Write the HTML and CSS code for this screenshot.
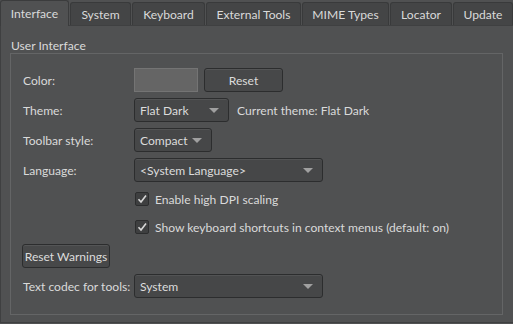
FILE: index.html
```html
<!DOCTYPE html>
<html>
<head>
<meta charset="utf-8">
<link rel="stylesheet" href="styles.css">
</head>
<body>
<div class="tabs">
  <div class="tab active w-interface">Interface</div>
  <div class="tab w-system">System</div>
  <div class="tab w-keyboard">Keyboard</div>
  <div class="tab w-ext">External Tools</div>
  <div class="tab w-mime">MIME Types</div>
  <div class="tab w-locator">Locator</div>
  <div class="tab w-update">Update</div>
</div>
<div class="pane">
  <div class="group-title">User Interface</div>
  <div class="group">
    <div class="form">
      <div class="label">Color:</div>
      <div class="row">
        <div class="swatch"></div>
        <div class="button w-reset">Reset</div>
      </div>

      <div class="label">Theme:</div>
      <div class="row">
        <div class="combo w-theme"><span>Flat Dark</span><span class="arrow"></span></div>
        <div class="text">Current theme: Flat Dark</div>
      </div>

      <div class="label">Toolbar style:</div>
      <div class="row">
        <div class="combo w-toolbar"><span>Compact</span><span class="arrow"></span></div>
      </div>

      <div class="label">Language:</div>
      <div class="row">
        <div class="combo w-wide"><span>&lt;System Language&gt;</span><span class="arrow"></span></div>
      </div>

      <div class="label"></div>
      <div class="row">
        <div class="check"><span class="box"><svg width="12" height="12" viewBox="0 0 12 12"><path d="M2.5 6.2 L5 9 L10 2.5" fill="none" stroke="#d8d8d8" stroke-width="1.6"/></svg></span>Enable high DPI scaling</div>
      </div>

      <div class="label"></div>
      <div class="row">
        <div class="check"><span class="box"><svg width="12" height="12" viewBox="0 0 12 12"><path d="M2.5 6.2 L5 9 L10 2.5" fill="none" stroke="#d8d8d8" stroke-width="1.6"/></svg></span>Show keyboard shortcuts in context menus (default: on)</div>
      </div>

      <div class="full">
        <div class="button w-warn">Reset Warnings</div>
      </div>

      <div class="label">Text codec for tools:</div>
      <div class="row">
        <div class="combo w-wide"><span>System</span><span class="arrow"></span></div>
      </div>
    </div>
  </div>
</div>
</body>
</html>
```
FILE: styles.css
```css
html, body {
  margin: 0;
  padding: 0;
  background: #505152;
  width: 513px;
  height: 324px;
  overflow: hidden;
}
body {
  font-family: "Lato", "Noto Sans", sans-serif;
  font-size: 12.1px;
  color: #dadada;
}
.tabs {
  display: flex;
  gap: 1px;
  height: 25px;
  align-items: flex-end;
}
.tab {
  box-sizing: border-box;
  height: 23px;
  background: #444546;
  border: 1px solid #393a3b;
  border-bottom: none;
  border-radius: 3px 3px 0 0;
  display: flex;
  align-items: center;
  justify-content: center;
  padding-top: 1px;
}
.tab.active {
  height: 26px;
  margin-bottom: -1px;
  background: #505152;
  position: relative;
  z-index: 1;
  border-color: #3b3c3d;
  padding-top: 0;
}
.w-interface { width: 69px; }
.w-system { width: 61px; }
.w-keyboard { width: 73px; }
.w-ext { width: 95px; }
.w-mime { width: 87px; }
.w-locator { width: 62px; }
.w-update { width: 60px; }

.pane {
  box-sizing: border-box;
  height: 298px;
  border: 1px solid #3f4041;
  border-right: none;
  padding: 12px 0 0 9px;
}
.group-title {
  height: 15px;
  line-height: 15px;
  padding-left: 1px;
}
.group {
  box-sizing: border-box;
  width: 493px;
  height: 262px;
  border: 1px solid #646566;
  padding: 14px 0 0 12px;
}
.form {
  display: grid;
  grid-template-columns: 111px 1fr;
  grid-template-rows: 24px 24px 24px 24px 22px 22px 24px 24px;
  row-gap: 6px;
}
.label {
  display: flex;
  align-items: center;
}
.row {
  display: flex;
  align-items: center;
  gap: 6px;
}
.full {
  grid-column: 1 / 3;
  display: flex;
  align-items: center;
  margin-left: -1px;
}
.swatch {
  box-sizing: border-box;
  width: 64px;
  height: 24px;
  background: #656565;
  border: 1px solid #747474;
}
.button {
  box-sizing: border-box;
  height: 24px;
  border: 1px solid #2c2d2e;
  border-radius: 3px;
  background: #474849;
  box-shadow: inset 0 1px 0 #545556;
  display: flex;
  align-items: center;
  justify-content: center;
  color: #dcdcdc;
}
.w-reset { width: 79px; }
.w-warn { width: 88px; }
.combo {
  box-sizing: border-box;
  height: 24px;
  border: 1px solid #2c2d2e;
  border-radius: 3px;
  background: #464748;
  box-shadow: inset 0 1px 0 #525354;
  display: flex;
  align-items: center;
  justify-content: space-between;
  padding: 0 9px 0 5px;
  color: #dcdcdc;
}
.arrow {
  width: 0;
  height: 0;
  border-left: 5px solid transparent;
  border-right: 5px solid transparent;
  border-top: 5px solid #a0a0a0;
}
.w-theme { width: 95px; }
.w-toolbar { width: 78px; }
.w-wide { width: 189px; }
.text {
  margin-left: 2px;
}
.check {
  display: flex;
  align-items: center;
  gap: 6px;
  margin-left: 1px;
}
.box {
  box-sizing: border-box;
  width: 14px;
  height: 14px;
  border: 1px solid #2c2d2e;
  border-radius: 2px;
  background: #3e3f40;
  display: flex;
  align-items: center;
  justify-content: center;
}
.box svg { display: block; }
```
